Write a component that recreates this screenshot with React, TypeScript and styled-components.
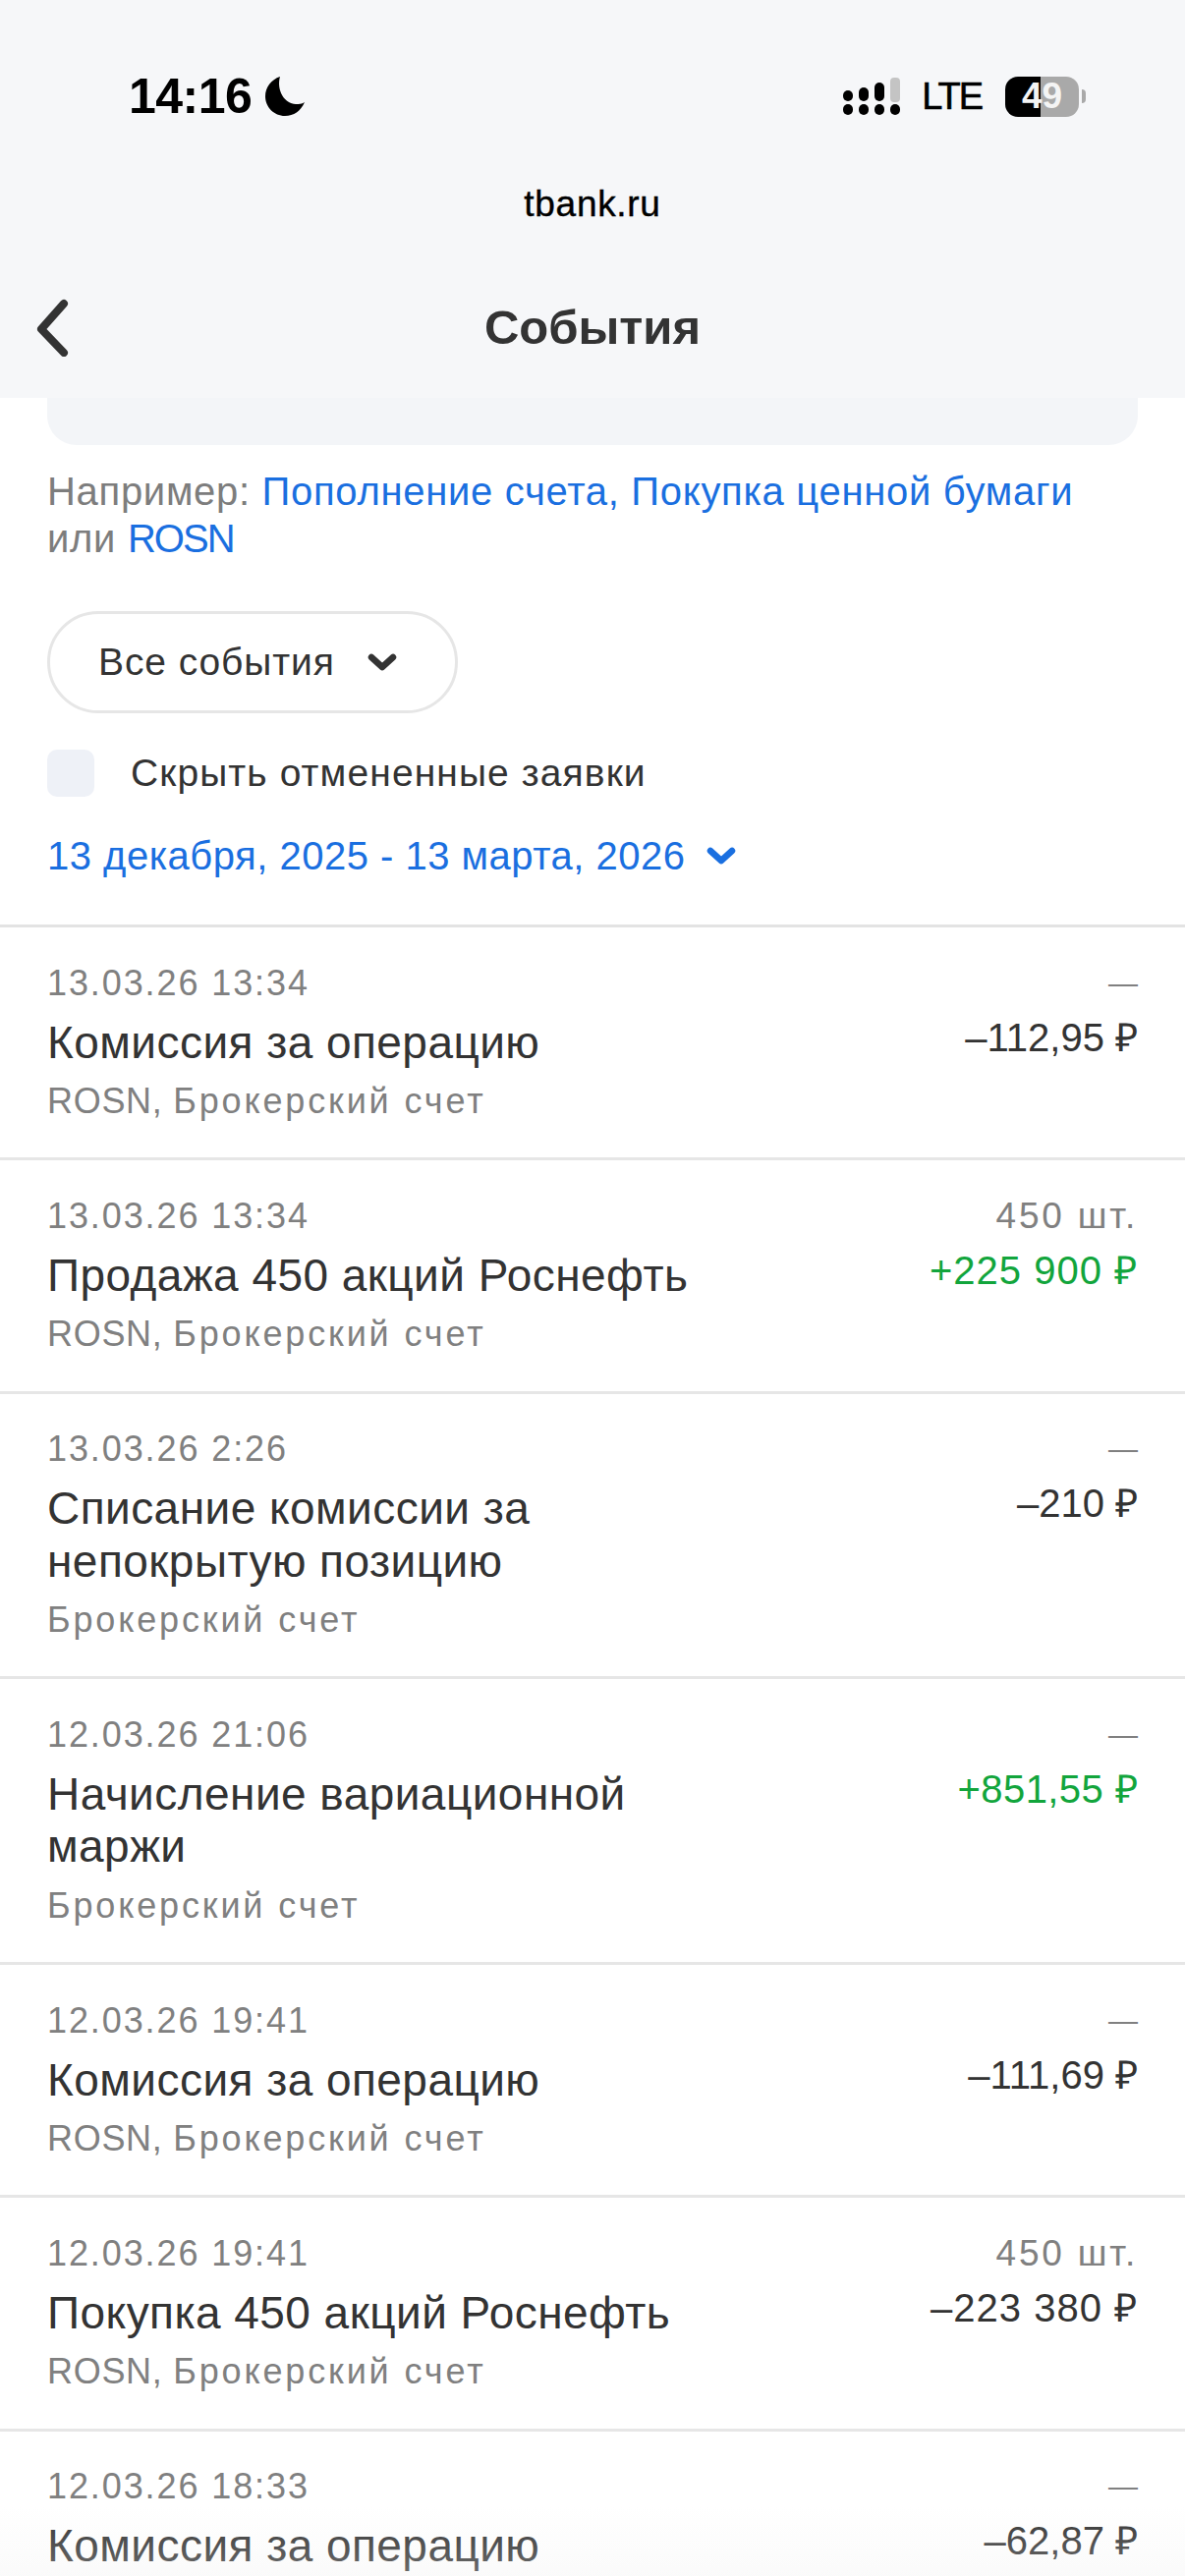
import styled, { createGlobalStyle } from "styled-components";

const GlobalStyle = createGlobalStyle`
  html, body {
    margin: 0;
    padding: 0;
    background: #fff;
  }
  body {
    font-family: "Liberation Sans", Arial, sans-serif;
  }
`;

const Page = styled.div`
  position: relative;
  width: 1206px;
  height: 2622px;
  overflow: hidden;
  background: #fff;
  color: #333;
`;

const Header = styled.header`
  height: 405px;
  box-sizing: border-box;
  background: #f6f7f9;
  padding-top: 72px;
`;

const StatusBar = styled.div`
  display: flex;
  align-items: center;
  justify-content: space-between;
  height: 52px;
  padding: 0 101px 0 131px;
`;

const StatusLeft = styled.div`
  display: flex;
  align-items: center;
  gap: 14px;
`;

const Clock = styled.span`
  font-size: 50px;
  font-weight: 700;
  letter-spacing: -0.5px;
  color: #000;
`;

const StatusRight = styled.div`
  display: flex;
  align-items: center;
`;

const Lte = styled.span`
  margin: 0 24px 0 22px;
  font-size: 38px;
  letter-spacing: -2px;
  color: #000;
  -webkit-text-stroke: 0.6px #000;
`;

const Battery = styled.div`
  display: flex;
  align-items: center;
  justify-content: center;
  width: 75px;
  height: 41px;
  border-radius: 13px;
  background: linear-gradient(to right, #000 48%, #a9a9a9 48%);
  color: #f4f4f4;
  font-size: 37px;
  font-weight: 700;
`;

const BatteryNub = styled.div`
  width: 4px;
  height: 14px;
  margin-left: 3px;
  border-radius: 0 4px 4px 0;
  background: #a9a9a9;
`;

const Address = styled.div`
  margin-top: 59px;
  font-size: 37px;
  line-height: 50px;
  letter-spacing: 0.7px;
  text-align: center;
  color: #000;
  -webkit-text-stroke: 0.4px #000;
`;

const NavBar = styled.div`
  display: flex;
  align-items: center;
  justify-content: center;
  position: relative;
  height: 120px;
  margin-top: 40px;
`;

const BackIcon = styled.svg`
  position: absolute;
  left: 34px;
  top: 30px;
`;

const PageTitle = styled.h1`
  margin: 0;
  font-size: 49px;
  font-weight: 700;
  color: #333;
`;

const Filters = styled.section`
  padding: 0 48px 46px;
  border-bottom: 3px solid #e3e3e3;
`;

const SearchStub = styled.div`
  height: 48px;
  background: #f3f5f8;
  border-radius: 0 0 30px 30px;
`;

const Hint = styled.p`
  margin: 23px 0 0;
  font-size: 40px;
  line-height: 48px;
  letter-spacing: 0.7px;
  color: #7d7d7d;
`;

const HintLink = styled.span<{ $ticker?: boolean }>`
  color: #1a6fe0;
  letter-spacing: ${({ $ticker }) => ($ticker ? "-2px" : "inherit")};
`;

const SelectPill = styled.button`
  display: flex;
  align-items: center;
  gap: 33px;
  box-sizing: border-box;
  width: 418px;
  height: 104px;
  margin-top: 50px;
  padding: 0 0 0 49px;
  background: #fff;
  border: 3px solid #e6e6e6;
  border-radius: 52px;
  font: inherit;
  font-size: 39px;
  letter-spacing: 0.9px;
  color: #333;
`;

const CheckRow = styled.label`
  display: flex;
  align-items: center;
  gap: 37px;
  margin-top: 37px;
  font-size: 39px;
  line-height: 48px;
  letter-spacing: 1.1px;
  color: #333;
`;

const CheckBox = styled.span`
  width: 48px;
  height: 48px;
  border-radius: 10px;
  background: #eef1f7;
`;

const DateRange = styled.div`
  display: flex;
  align-items: center;
  gap: 21px;
  margin-top: 36px;
  font-size: 40px;
  line-height: 48px;
  letter-spacing: 0.5px;
  color: #1a6fe0;
`;

const Row = styled.article`
  display: flex;
  justify-content: space-between;
  box-sizing: border-box;
  padding: 34.5px 48px 35.3px;
  border-bottom: 3px solid #e6e6e6;
`;

const RowMain = styled.div`
  flex: 0 0 680px;
`;

const RowDate = styled.div`
  font-size: 36px;
  line-height: 44px;
  letter-spacing: 1.9px;
  color: #808080;
`;

const RowTitle = styled.div`
  margin-top: 12px;
  font-size: 46px;
  line-height: 53.5px;
  letter-spacing: 0.45px;
  color: #333;
`;

const RowSub = styled.div`
  margin-top: 11px;
  font-size: 36px;
  line-height: 44px;
  letter-spacing: 2.85px;
  color: #808080;
`;

const Ticker = styled.span`
  letter-spacing: 0.7px;
`;

const RowSide = styled.div`
  text-align: right;
`;

const RowQty = styled.div<{ $dash: boolean }>`
  font-size: ${({ $dash }) => ($dash ? "30px" : "37px")};
  line-height: 44px;
  letter-spacing: ${({ $dash }) => ($dash ? "0" : "2.8px")};
  color: #808080;
`;

const RowAmount = styled.div<{ $positive: boolean; $grouped: boolean }>`
  margin-top: 6px;
  font-size: 40px;
  line-height: 54px;
  letter-spacing: ${({ $positive, $grouped }) => ($grouped ? "1px" : $positive ? "0.4px" : "0")};
  color: ${({ $positive }) => ($positive ? "#12a53c" : "#333")};
`;

const BottomFade = styled.div`
  position: absolute;
  left: 0;
  right: 0;
  bottom: 0;
  height: 70px;
  background: linear-gradient(to bottom, rgba(255, 255, 255, 0), rgba(240, 240, 240, 0.3));
  pointer-events: none;
`;

type Operation = {
  date: string;
  title: string;
  ticker?: string;
  sub?: string;
  qty: string;
  amount: string;
};

const operations: Operation[] = [
  { date: "13.03.26 13:34", title: "Комиссия за операцию", ticker: "ROSN,", sub: "Брокерский счет", qty: "—", amount: "–112,95 ₽" },
  { date: "13.03.26 13:34", title: "Продажа 450 акций Роснефть", ticker: "ROSN,", sub: "Брокерский счет", qty: "450 шт.", amount: "+225 900 ₽" },
  { date: "13.03.26 2:26", title: "Списание комиссии за непокрытую позицию", sub: "Брокерский счет", qty: "—", amount: "–210 ₽" },
  { date: "12.03.26 21:06", title: "Начисление вариационной маржи", sub: "Брокерский счет", qty: "—", amount: "+851,55 ₽" },
  { date: "12.03.26 19:41", title: "Комиссия за операцию", ticker: "ROSN,", sub: "Брокерский счет", qty: "—", amount: "–111,69 ₽" },
  { date: "12.03.26 19:41", title: "Покупка 450 акций Роснефть", ticker: "ROSN,", sub: "Брокерский счет", qty: "450 шт.", amount: "–223 380 ₽" },
  // the subtitle of this one is below the fold
  { date: "12.03.26 18:33", title: "Комиссия за операцию", qty: "—", amount: "–62,87 ₽" },
];

function SignalIcon() {
  return (
    <svg width="58" height="38" viewBox="0 0 58 38">
      <rect x="0" y="27" width="10" height="11" rx="5" fill="#000" />
      <rect x="16" y="27" width="10" height="11" rx="5" fill="#000" />
      <rect x="32" y="27" width="10" height="11" rx="5" fill="#000" />
      <rect x="48" y="27" width="10" height="11" rx="5" fill="#000" />
      <rect x="0" y="13" width="10" height="11" rx="5" fill="#000" />
      <rect x="16" y="10" width="10" height="14" rx="5" fill="#000" />
      <rect x="32" y="5" width="10" height="19" rx="5" fill="#000" />
      <rect x="48" y="0" width="10" height="25" rx="4" fill="#c4c4c4" />
    </svg>
  );
}

function MoonIcon() {
  return (
    <svg width="40" height="40" viewBox="0 0 40 40">
      <path d="M15 0C6 3 0 11 0 20c0 11 9 20 20 20 9 0 16-5 20-14-3 2-6 2-9 2C20 28 11 14 15 0z" fill="#000" />
    </svg>
  );
}

function Chevron({ color }: { color: string }) {
  return (
    <svg width="30" height="18" viewBox="0 0 30 18" fill="none">
      <path d="M4 4l11 10L26 4" stroke={color} strokeWidth="6.5" strokeLinecap="round" strokeLinejoin="round" />
    </svg>
  );
}

export default function App() {
  return (
    <Page>
      <GlobalStyle />
      <Header>
        <StatusBar>
          <StatusLeft>
            <Clock>14:16</Clock>
            <MoonIcon />
          </StatusLeft>
          <StatusRight>
            <SignalIcon />
            <Lte>LTE</Lte>
            <Battery>49</Battery>
            <BatteryNub />
          </StatusRight>
        </StatusBar>
        <Address>tbank.ru</Address>
        <NavBar>
          <BackIcon width="40" height="60" viewBox="0 0 40 60" fill="none">
            <path d="M31 6L8 32l23 24" stroke="#333" strokeWidth="8" strokeLinecap="round" strokeLinejoin="round" />
          </BackIcon>
          <PageTitle>События</PageTitle>
        </NavBar>
      </Header>
      <Filters>
        <SearchStub />
        <Hint>
          Например: <HintLink>Пополнение счета, Покупка ценной бумаги</HintLink>
          <br />
          или <HintLink $ticker>ROSN</HintLink>
        </Hint>
        <SelectPill>
          Все события
          <Chevron color="#333" />
        </SelectPill>
        <CheckRow>
          <CheckBox />
          Скрыть отмененные заявки
        </CheckRow>
        <DateRange>
          13 декабря, 2025 - 13 марта, 2026
          <Chevron color="#1a6fe0" />
        </DateRange>
      </Filters>
      {operations.map((op, i) => (
        <Row key={i}>
          <RowMain>
            <RowDate>{op.date}</RowDate>
            <RowTitle>{op.title}</RowTitle>
            {op.sub && (
              <RowSub>
                {op.ticker && <Ticker>{op.ticker} </Ticker>}
                {op.sub}
              </RowSub>
            )}
          </RowMain>
          <RowSide>
            <RowQty $dash={op.qty === "—"}>{op.qty}</RowQty>
            <RowAmount $positive={op.amount.startsWith("+")} $grouped={op.amount.length > 9}>
              {op.amount}
            </RowAmount>
          </RowSide>
        </Row>
      ))}
      <BottomFade />
    </Page>
  );
}
